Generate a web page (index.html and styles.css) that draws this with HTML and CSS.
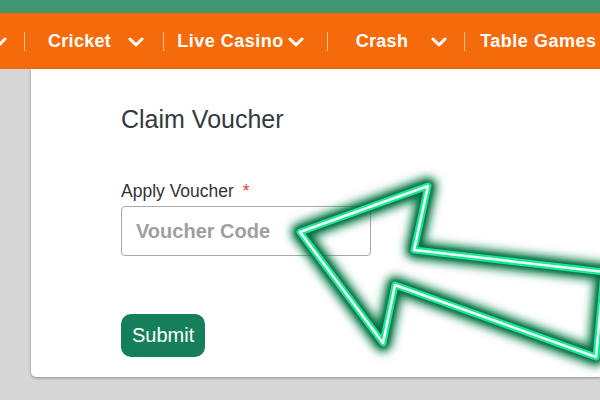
FILE: index.html
```
<!DOCTYPE html>
<html>
<head>
<meta charset="utf-8">
<link rel="stylesheet" href="styles.css">
</head>
<body>
<div class="topbar"></div>
<nav class="nav">
  <span class="chev chev-first"><svg viewBox="0 0 16 10" width="16" height="10"><path d="M2 2 L8 8 L14 2" fill="none" stroke="#fff" stroke-width="3" stroke-linecap="round" stroke-linejoin="round"/></svg></span>
  <span class="sep sep-first"></span>
  <span class="item item-cricket">Cricket</span>
  <span class="chev"><svg viewBox="0 0 16 10" width="16" height="10"><path d="M2 2 L8 8 L14 2" fill="none" stroke="#fff" stroke-width="3" stroke-linecap="round" stroke-linejoin="round"/></svg></span>
  <span class="sep"></span>
  <span class="item item-live">Live Casino</span>
  <span class="chev chev-tight"><svg viewBox="0 0 16 10" width="16" height="10"><path d="M2 2 L8 8 L14 2" fill="none" stroke="#fff" stroke-width="3" stroke-linecap="round" stroke-linejoin="round"/></svg></span>
  <span class="sep"></span>
  <span class="item item-crash">Crash</span>
  <span class="chev chev-wide"><svg viewBox="0 0 16 10" width="16" height="10"><path d="M2 2 L8 8 L14 2" fill="none" stroke="#fff" stroke-width="3" stroke-linecap="round" stroke-linejoin="round"/></svg></span>
  <span class="sep"></span>
  <span class="item item-table">Table Games</span>
</nav>
<main class="main">
  <section class="card">
    <h1 class="title">Claim Voucher</h1>
    <label class="label">Apply Voucher <span class="req">*</span></label>
    <input class="input" type="text" placeholder="Voucher Code">
    <button class="btn">Submit</button>
  </section>
</main>
<svg class="arrow" width="600" height="400" viewBox="0 0 600 400">
  <defs>
    <filter id="glow" x="-20%" y="-20%" width="140%" height="140%">
      <feGaussianBlur stdDeviation="5"/>
    </filter>
    <filter id="glow2" x="-20%" y="-20%" width="140%" height="140%">
      <feGaussianBlur stdDeviation="2"/>
    </filter>
  </defs>
  <polygon points="300,232 428,186 414,250 604,272 596,357 395,285 383,343" fill="none" stroke="#0b7f4b" stroke-width="18" stroke-linejoin="round" filter="url(#glow)"/>
  <polygon points="300,232 428,186 414,250 604,272 596,357 395,285 383,343" fill="none" stroke="#06643a" stroke-width="11" stroke-linejoin="round" opacity="0.75" filter="url(#glow2)"/>
  <polygon points="300,232 428,186 414,250 604,272 596,357 395,285 383,343" fill="none" stroke="#17e895" stroke-width="7" stroke-linejoin="round"/>
  <polygon points="300,232 428,186 414,250 604,272 596,357 395,285 383,343" fill="none" stroke="#f2fff9" stroke-width="2.5" stroke-linejoin="round"/>
</svg>
</body>
</html>
```
FILE: styles.css
```
html, body {
  margin: 0;
  padding: 0;
}
body {
  background: #d6d6d6;
  width: 600px;
  height: 400px;
  overflow: hidden;
  position: relative;
  font-family: "Liberation Sans", Arial, sans-serif;
}
.topbar {
  height: 13px;
  background: #3f9670;
}
.nav {
  height: 56px;
  background: #f56a0a;
  display: flex;
  align-items: center;
  color: #fff;
  white-space: nowrap;
  margin-left: -9px;
}
.nav > * {
  flex-shrink: 0;
}
.item {
  font-size: 18px;
  font-weight: bold;
  letter-spacing: 0.3px;
  line-height: 20px;
}
.chev {
  display: flex;
  align-items: center;
  margin-top: 1px;
}
.sep {
  width: 1px;
  height: 19px;
  background: rgba(255, 255, 255, 0.6);
}
.chev + .sep { margin-left: 19px; }
.chev-first + .sep-first { margin-left: 17px; }
.item-cricket { margin-left: 23px; margin-right: 17px; }
.item-live { margin-left: 13px; margin-right: 4px; letter-spacing: 0.5px; }
.chev-tight + .sep { margin-left: 23px; }
.item-crash { margin-left: 28px; margin-right: 23px; }
.chev-wide + .sep { margin-left: 17px; }
.item-table { margin-left: 15px; letter-spacing: 0.5px; }

.main {
  padding-left: 31px;
}
.card {
  background: #fff;
  height: 308px;
  box-sizing: border-box;
  padding: 35px 0 0 90px;
  border-radius: 0 0 0 5px;
  box-shadow: 0 1px 3px rgba(0, 0, 0, 0.35);
  display: flex;
  flex-direction: column;
  align-items: flex-start;
}
.title {
  margin: 0;
  font-size: 25px;
  font-weight: normal;
  line-height: 30px;
  color: #333a40;
}
.label {
  margin-top: 47px;
  font-size: 17.5px;
  line-height: 21px;
  color: #333;
}
.req {
  color: #e53e3e;
  margin-left: 4px;
}
.input {
  margin-top: 4px;
  width: 250px;
  height: 50px;
  box-sizing: border-box;
  border: 1px solid #a8a8a8;
  border-radius: 4px;
  padding: 0 14px;
  font-family: "Liberation Sans", Arial, sans-serif;
  font-size: 20px;
  font-weight: bold;
  outline: none;
}
.input::placeholder {
  color: #9f9f9f;
}
.btn {
  margin-top: 58px;
  height: 43px;
  padding: 0 11px;
  border: none;
  border-radius: 10px;
  background: #157f5c;
  color: #fff;
  font-family: "Liberation Sans", Arial, sans-serif;
  font-size: 20px;
}
.arrow {
  position: absolute;
  left: 0;
  top: 0;
  pointer-events: none;
}
```
